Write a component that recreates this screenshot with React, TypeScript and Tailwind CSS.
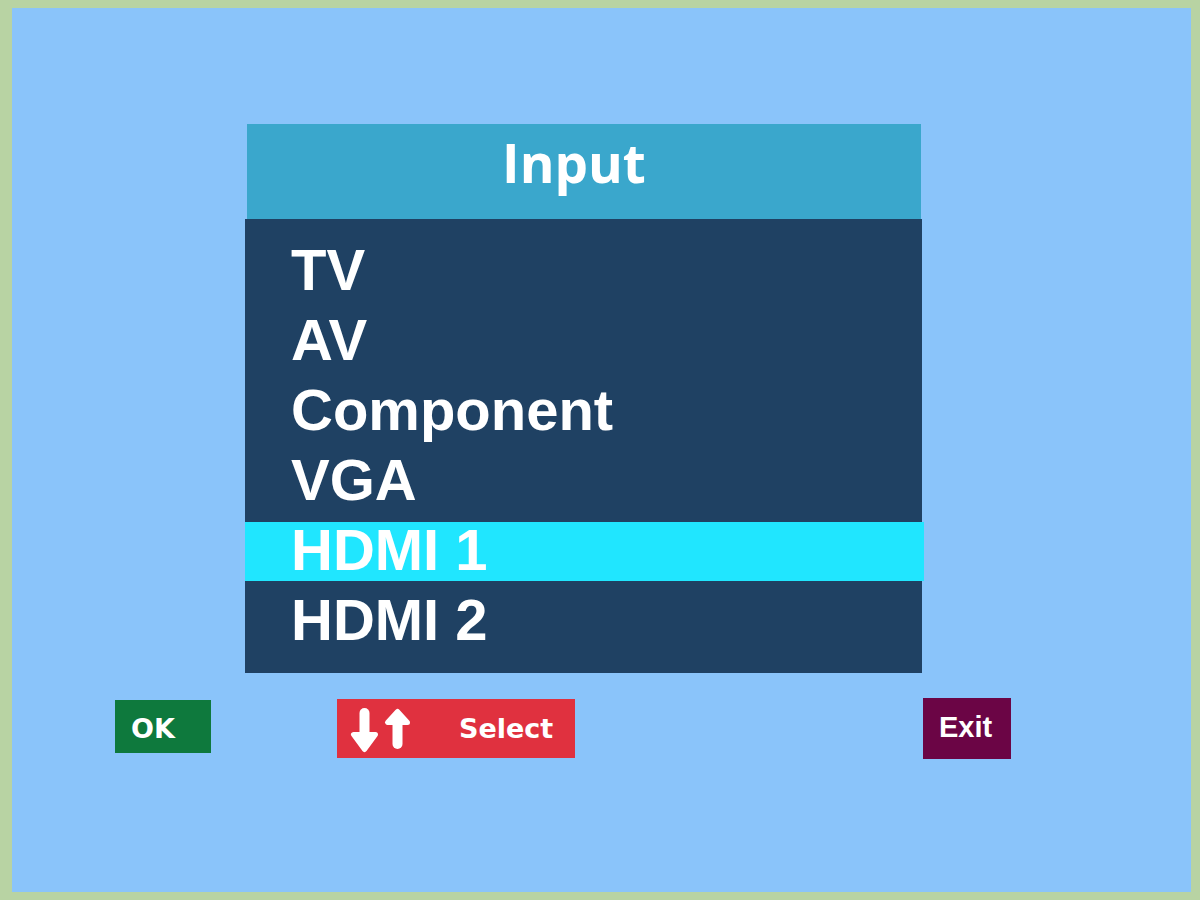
import React from "react";

const items = ["TV", "AV", "Component", "VGA", "HDMI 1", "HDMI 2"];

function Arrows() {
  return (
    <svg width="62" height="46" viewBox="0 0 62 46" className="block">
      {/* down arrow */}
      <line x1="14.5" y1="6" x2="14.5" y2="30" stroke="white" strokeWidth="10" strokeLinecap="round" />
      <polygon points="3.5,27.5 25.5,27.5 14.5,42.5" fill="white" stroke="white" strokeWidth="5" strokeLinejoin="round" />
      {/* up arrow */}
      <line x1="47.5" y1="16" x2="47.5" y2="37" stroke="white" strokeWidth="10" strokeLinecap="round" />
      <polygon points="37.5,15.5 57.5,15.5 47.5,4.5" fill="white" stroke="white" strokeWidth="5" strokeLinejoin="round" />
    </svg>
  );
}

export default function App() {
  return (
    <div className="w-[1200px] h-[900px] bg-[#b8d3a3] pt-[8px] pl-[12px] pr-[9px] pb-[8px]">
      <div className="w-full h-full bg-[#8ac4fa] flex flex-col pt-[116px]">
        <div className="ml-[235px] w-[674px] h-[95px] bg-[#3aa7cc] flex justify-center items-start pt-[12px] pr-[20px]">
          <span
            className="text-white font-bold text-[53px] leading-none"
            style={{ fontFamily: '"Open Sans", sans-serif' }}
          >
            Input
          </span>
        </div>
        <div className="ml-[233px] w-[677px] h-[454px] bg-[#1f4163] flex flex-col gap-[11px] pt-[23px]">
          {items.map((it) => (
            <div
              key={it}
              className={`h-[59px] pl-[46px] ${it === "HDMI 1" ? "bg-[#20e6ff] w-[679px]" : ""}`}
            >
              <span
                className="block text-white font-bold text-[58px] leading-[55px]"
                style={{ fontFamily: '"Liberation Sans", Arial, sans-serif' }}
              >
                {it}
              </span>
            </div>
          ))}
        </div>
        <div className="flex items-start mt-[25px]">
          <div className="ml-[103px] mt-[2px] w-[96px] h-[53px] bg-[#0e793d] pl-[16px] pt-[15px]">
            <span
              className="block text-white font-bold text-[27px] leading-none"
              style={{ fontFamily: '"DejaVu Sans", sans-serif' }}
            >
              OK
            </span>
          </div>
          <div className="ml-[126px] mt-[1px] w-[238px] h-[59px] bg-[#e0313f] flex items-start">
            <div className="pl-[13px] pt-[8px]">
              <Arrows />
            </div>
            <span
              className="block ml-[47px] pt-[16px] text-white font-bold text-[27px] leading-none"
              style={{ fontFamily: '"DejaVu Sans", sans-serif' }}
            >
              Select
            </span>
          </div>
          <div className="ml-[348px] w-[88px] h-[61px] bg-[#6b0545] pl-[16px] pt-[15px]">
            <span
              className="block text-white font-bold text-[29px] leading-none"
              style={{ fontFamily: '"Liberation Sans", Arial, sans-serif' }}
            >
              Exit
            </span>
          </div>
        </div>
      </div>
    </div>
  );
}
